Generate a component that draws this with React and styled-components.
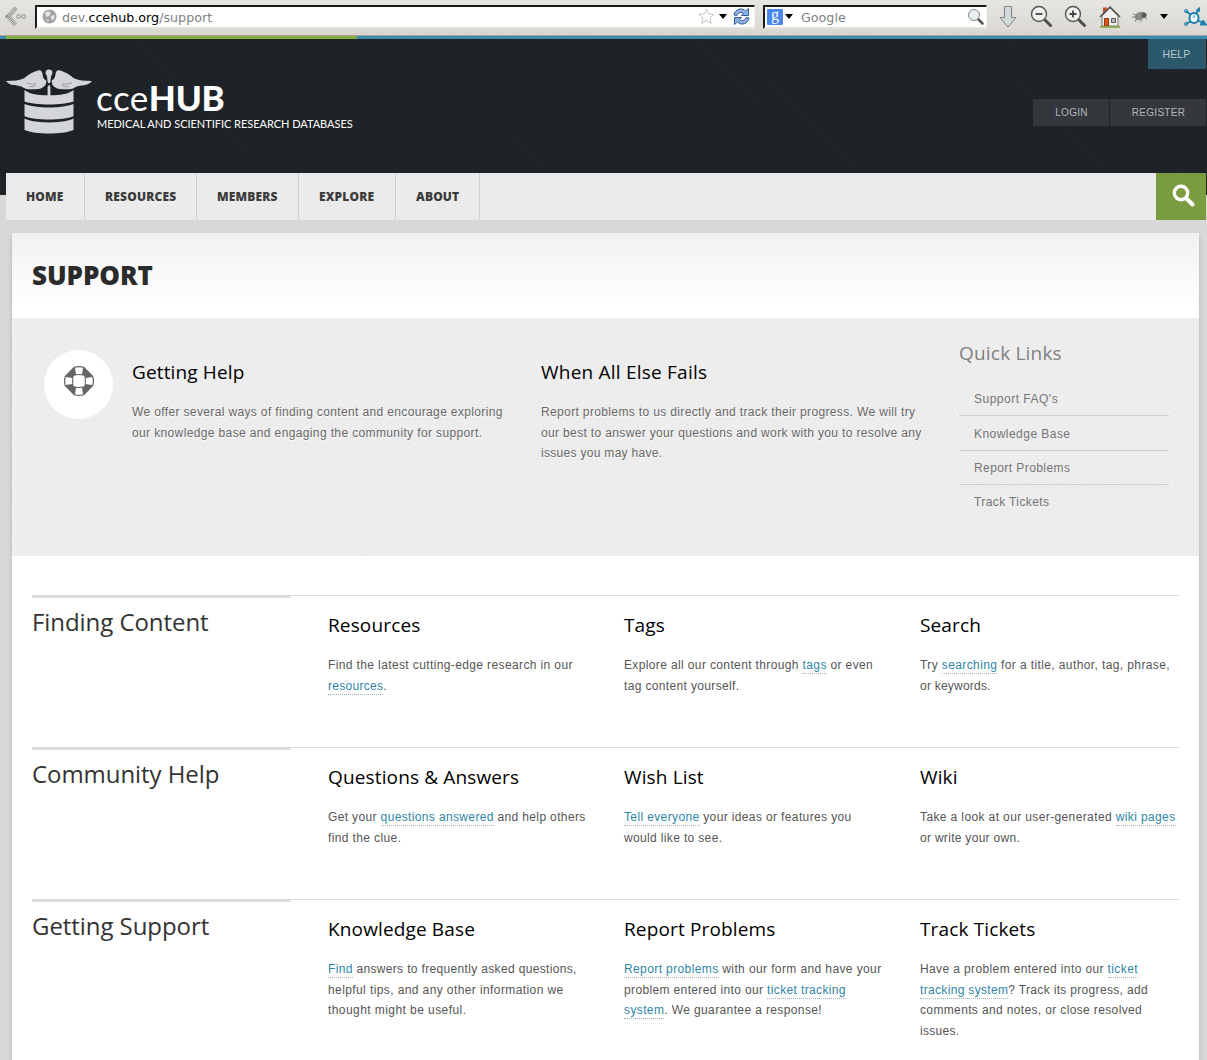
import React from "react";
import styled, { createGlobalStyle } from "styled-components";

const Global = createGlobalStyle`
  * { box-sizing: border-box; }
  body { margin: 0; background: #d8d8d8; font-family: "Liberation Sans", sans-serif; font-size: 12px; overflow: hidden; }
  h1, h2, h3, p, ul { margin: 0; padding: 0; font-weight: 400; }
  ul { list-style: none; }
  svg { display: block; flex: none; }
`;

const Toolbar = styled.div`
  display: flex; align-items: center; height: 36px; padding: 0 0 2px 4px; overflow: hidden;
  background: linear-gradient(#e6e5e1, #dad7d2); border-bottom: 1px solid #a9a29c;
`;
const Field = styled.div`
  display: flex; align-items: center; width: ${(p) => p.$w}px; height: 24px; margin-left: ${(p) => p.$ml}px; flex: none;
  background: #fff; border: solid; border-width: 2px 1px 2px 2px; border-color: #1c1b1a #efeeeb #e4e2de #1c1b1a;
  font: 12.7px "DejaVu Sans", sans-serif; color: #808080; white-space: pre;
`;
const Host = styled.span`color: #000;`;
const Url = styled.span`flex: 1; padding: 1px 0 0 ${(p) => p.$pl}px;`;
const Caret = styled.i`
  flex: none; border: 4.5px solid transparent; border-top: 5px solid #000; border-bottom: 0;
  margin-left: ${(p) => p.$ml || 0}px; margin-right: ${(p) => p.$mr || 0}px;
`;
const G = styled.b`
  display: grid; place-items: center; width: 16px; height: 16px; margin-left: 2px; background: #4b86ee; border-radius: 1px;
  color: #fff; font: 400 16px/12px "Liberation Serif", serif; padding-bottom: 3px;
`;
const ToolIcon = styled.svg`margin-left: ${(p) => p.$ml || 0}px; margin-right: ${(p) => p.$mr || 0}px;`;

const Page = styled.div`
  height: 1024px; overflow: hidden;
  background: linear-gradient(#1f2429 159px, #d8d8d8 159px);
`;
const Stripe = styled.div`
  height: 3px; background: linear-gradient(90deg, #3b8bb0 6px, #86ae43 6px, #86ae43 357px, #3b8bb0 357px);
`;
const Header = styled.header`
  display: flex; justify-content: space-between; height: 134px; padding: 0 1px 0 6px;
  background: repeating-linear-gradient(45deg, rgba(0,0,0,.08) 0 1px, transparent 1px 3px), #1f2429;
`;
const Brand = styled.div`display: flex; padding-top: 30px; color: #fff;`;
const BrandText = styled.div`padding: 10px 0 0 4px; font-family: Lato, sans-serif;`;
const BrandName = styled.div`
  font-size: 35px; line-height: 37px; letter-spacing: .5px;
  b { font-weight: 900; letter-spacing: -.2px; }
`;
const Tagline = styled.div`
  margin: 1px 0 0 1px; font-size: 11px; line-height: 14px; letter-spacing: -.03px; white-space: nowrap;
`;
const Account = styled.div`display: flex; flex-direction: column; align-items: flex-end;`;
const Help = styled.a`
  display: grid; place-items: center; width: 58px; height: 30px; padding: 0 1px 1px 0; background: #2c586c;
  color: #b9c6cd; font-size: 10.5px; letter-spacing: .1px;
`;
const Buttons = styled.div`display: flex; gap: 1px; margin-top: 30px;`;
const Button = styled.a`
  display: grid; place-items: center; width: ${(p) => p.$w}px; height: 27px; padding-left: 1px; background: #34383d;
  color: #b4b6b8; font-size: 10px; letter-spacing: .3px;
`;
const Nav = styled.nav`display: flex; height: 47px; margin: 0 1px 0 6px; background: #ebebeb;`;
const NavItem = styled.a`
  width: ${(p) => p.$w}px; padding-left: 20px; border-right: 1px solid #d0d0d0;
  font: 800 12px/47px "Open Sans", sans-serif; color: #3b3b3b; letter-spacing: .17px;
`;
const SearchBtn = styled.div`
  width: 50px; margin-left: auto; padding: 11px 0 0 16px;
  background: repeating-linear-gradient(125deg, rgba(0,0,0,.03) 0 1px, transparent 1px 4px), #7c9d40;
`;

const Card = styled.main`height: 900px; margin: 13px 8px 0 12px; background: #fff; box-shadow: 0 3px 5px rgba(0,0,0,.16);`;
const TitleBar = styled.div`height: 85px; padding: 0 20px; background: linear-gradient(#f1f1f1, #fff 85%);`;
const Title = styled.h1`font: 800 26px/85px "Open Sans", sans-serif; color: #2b2b2b; letter-spacing: -.05px;`;
const Intro = styled.section`
  display: flex; height: 238px; padding: 0 30px 0 32px;
  background:
    repeating-linear-gradient(63deg, rgba(0,0,0,.008) 0 1px, transparent 1px 4px),
    repeating-linear-gradient(-38deg, rgba(255,255,255,.12) 0 1px, transparent 1px 5px), #ededed;
`;
const Circle = styled.div`
  flex: none; width: 69px; height: 69px; margin: 32px 19px 0 0; padding: 16px 0 0 20px; border-radius: 50%; background: #fff;
`;
const IntroCol = styled.div`flex: none; width: ${(p) => p.$w}px; padding-top: 39px; p { color: #666; text-shadow: 0 1px 0 #fff; }`;
const H3 = styled.h3`
  font: 400 19px/30px "Open Sans", sans-serif; color: ${(p) => p.$c || "#000"}; letter-spacing: ${(p) => p.$ls ?? 0.14}px; white-space: nowrap;
`;
const Copy = styled.p`margin-top: 15px; color: #555;`;
const Line = styled.span`
  display: block; height: 20.6px; line-height: 20.6px; white-space: nowrap; letter-spacing: ${(p) => p.$ls}px;
`;
const Link = styled.a`color: #2e86a5; padding-bottom: 1px; border-bottom: 1px dotted #9ab5bb;`;
const Quick = styled.aside`flex: 1; padding-top: 20px;`;
const QuickList = styled.ul`margin-top: 13px;`;
const QuickItem = styled.li`
  height: 34.4px; padding-left: 15px; line-height: ${(p) => p.$lh || 35}px; color: #757575; letter-spacing: ${(p) => p.$ls}px;
  & + & { border-top: 1px solid #cfcfcf; }
`;
const Sections = styled.div`padding: 39px 20px 0;`;
const Section = styled.section`
  display: grid; grid-template-columns: 259px 259px 259px 1fr; column-gap: 37px; height: 152px; border-top: 1px solid #dedede;
`;
const Topic = styled.h2`
  height: 40px; margin-top: -1px; border-top: 3px solid #dedede;
  font: 400 24px/47px "Open Sans", sans-serif; color: #333; letter-spacing: -.06px;
`;
const Cell = styled.div`padding-top: 14px;`;

const Text = ({ lines }) => (
  <Copy>
    {lines.map(([ls, ...parts], i) => (
      <Line key={i} $ls={ls}>
        {parts.map((t, j) => (t[0] === "@" ? <Link key={j}>{t.slice(1)}</Link> : t))}
      </Line>
    ))}
  </Copy>
);

const SECTIONS = [
  { t: "Finding Content", cells: [
    ["Resources", [[0.38, "Find the latest cutting-edge research in our"], [0.28, "@resources", "."]]],
    ["Tags", [[0.37, "Explore all our content through ", "@tags", " or even"], [0.35, "tag content yourself."]]],
    ["Search", [[0.39, "Try ", "@searching", " for a title, author, tag, phrase,"], [0.22, "or keywords."]]],
  ] },
  { t: "Community Help", cells: [
    ["Questions & Answers", [[0.36, "Get your ", "@questions answered", " and help others"], [0.37, "find the clue."]]],
    ["Wish List", [[0.37, "@Tell everyone", " your ideas or features you"], [0.35, "would like to see."]]],
    ["Wiki", [[0.38, "Take a look at our user-generated ", "@wiki pages"], [0.3, "or write your own."]]],
  ] },
  { t: "Getting Support", cells: [
    ["Knowledge Base", [[0.34, "@Find", " answers to frequently asked questions,"], [0.4, "helpful tips, and any other information we"], [0.43, "thought might be useful."]]],
    ["Report Problems", [[0.39, "@Report problems", " with our form and have your"], [0.36, "problem entered into our ", "@ticket tracking"], [0.38, "@system", ". We guarantee a response!"]]],
    ["Track Tickets", [[0.38, "Have a problem entered into our ", "@ticket"], [0.33, "@tracking system", "? Track its progress, add"], [0.36, "comments and notes, or close resolved"], [0.3, "issues."]]],
  ] },
];

const Magnifier = ({ sign, ml }) => (
  <ToolIcon $ml={ml} width="24" height="24" viewBox="0 0 24 24">
    <path d="M15 15l5.500 5.500" stroke="#4c4c4c" strokeWidth="3" strokeLinecap="round" />
    <circle cx="9" cy="9" r="7.500" fill="#f0f0ee" stroke="#555753" strokeWidth="1.400" />
    <path d={sign === "+" ? "M5.500 9h7M9 5.500v7" : "M5.500 9h7"} stroke="#444" strokeWidth="1.800" />
  </ToolIcon>
);

const Logo = () => (
  <svg width="86" height="66" viewBox="0 0 86 66" fill="#d3d5d8">
    <circle cx="43" cy="3.800" r="3.400" />
    <path d="M40.800 6h4.400l-1 8h-2.400z" />
    <path d="M0 12C8 12 14 11.500 18 9.300c4-3 7-5.700 14-7.800 3-.8 3.500.5 4.300 2.500C37 8 37 10 40.500 11.500L39.500 16c-2 2.800-6 4.500-11 4.300-4-.2-7 .5-10-1-2-1-3-2-6-2.500C8 16.300 3 16 0 12z" />
    <path d="M86 12C78 12 72 11.500 68 9.300c-4-3-7-5.700-14-7.800-3-.8-3.500.5-4.300 2.500C49 8 49 10 45.500 11.500L46.500 16c2 2.800 6 4.500 11 4.300 4-.2 7 .5 10-1 2-1 3-2 6-2.500C78 16.300 83 16 86 12z" />
    <path d="M20 14c4 .8 7 2 10 .5M23 17.500c3 .6 5 0 7-1.500M66 14c-4 .8-7 2-10 .5M63 17.500c-3 .6-5 0-7-1.500" stroke="#73777b" strokeWidth=".6" fill="none" />
    <path d="M41.600 18L43 15.500l1.400 2.500v9h-2.800z" />
    <path d="M18.500 21C22 24 29 26 38 26.300h10c9-.3 16-2.300 19.500-5.300v11.500c-11 4-38 4-49 0z" />
    <path d="M18.500 35c11 4.600 38 4.600 49 0v12.300c-11 4.400-38 4.400-49 0z" />
    <path d="M18.500 49.500c11 5.200 38 5.200 49 0V61c-11 4.800-38 4.800-49 0z" />
  </svg>
);

export default function App() {
  return (
    <>
      <Global />
      <Toolbar>
        <ToolIcon width="24" height="22" viewBox="0 0 24 22" fill="none" stroke="#8d8c89">
          <path d="M12 2L4 10.500l8 8.500" strokeWidth="4.500" strokeDasharray="1 .8" />
          <circle cx="14.500" cy="10.500" r="1.800" /><circle cx="19.700" cy="10.500" r="1.800" />
        </ToolIcon>
        <Field $w={720} $ml={7}>
          <ToolIcon $ml={5} width="15" height="15" viewBox="0 0 15 15">
            <circle cx="7.500" cy="7.500" r="7" fill="#a3a3a3" />
            <path d="M3 4l3-2 3 2-2 3-3 1zM9 7l4-1-1 4-3 1zM4 10l3 1-1 2z" fill="#e4e4e4" />
          </ToolIcon>
          <Url $pl={5}>dev.<Host>ccehub.org</Host>/support</Url>
          <ToolIcon $mr={1} width="17" height="17" viewBox="0 0 17 17">
            <path d="M8.500 1l2.200 5 5.300.4-4 3.600 1.200 5.300-4.700-2.900-4.700 2.900L5 10 1 6.400 6.300 6z" fill="#fff" stroke="#c4c4c4" />
          </ToolIcon>
          <Caret $ml={3} />
          <ToolIcon $ml={6} $mr={4} width="17" height="17" viewBox="0 0 17 17">
            <path d="M1 7C2 1 9-1 12.500 3L15.500 .5v7H8.500l2-2C8 3.500 5 4.500 4 7.500z" fill="#8fb1df" stroke="#204f94" strokeWidth=".9" />
            <path d="M16 10c-1 6-8 8-11.500 4L1.500 16.500v-7h7l-2 2c2.500 2 5.500 1 6.500-2z" fill="#8fb1df" stroke="#204f94" strokeWidth=".9" />
          </ToolIcon>
        </Field>
        <Field $w={224} $ml={8}>
          <G>g</G>
          <Caret $ml={2} />
          <Url $pl={8}>Google</Url>
          <ToolIcon $mr={1} width="18" height="18" viewBox="0 0 18 18">
            <path d="M11 11l4.500 4.500" stroke="#555" strokeWidth="2.600" strokeLinecap="round" />
            <circle cx="7" cy="7" r="5.500" fill="#e6eef2" stroke="#8a8a8a" />
          </ToolIcon>
        </Field>
        <ToolIcon $ml={11} width="20" height="24" viewBox="0 0 20 24">
          <path d="M6.500 1.500h7v11h4.500l-8 9.500-8-9.500h4.500z" fill="#d5dada" stroke="#7f8282" strokeLinejoin="round" />
        </ToolIcon>
        <Magnifier sign="-" ml={12} />
        <Magnifier sign="+" ml={10} />
        <ToolIcon $ml={11} width="22" height="22" viewBox="0 0 22 22">
          <path d="M4 1.500h4v7H4z" fill="#c94f24" />
          <path d="M3 10l8-8 8 8v10H3z" fill="#efefed" stroke="#77776f" />
          <path d="M1 11L11 1l10 10" fill="none" stroke="#555" strokeWidth="1.500" />
          <path d="M5.500 12.500h4V20h-4z" fill="#e0561d" stroke="#8f3310" /><path d="M12.500 12.500h4v4h-4z" fill="#bbb" stroke="#555" />
          <path d="M1 21h20" stroke="#80a93b" strokeWidth="1.600" />
        </ToolIcon>
        <ToolIcon $ml={10} width="18" height="16" viewBox="0 0 18 16">
          <ellipse cx="9" cy="7" rx="5.500" ry="4" fill="#8d8d8b" transform="rotate(-20 9 7)" /><circle cx="13" cy="6" r="2.600" fill="#565654" />
          <path d="M2 5l5 2M1 8l5 0M6 9l-2 4M10 9l0 4M13 8l3 2" stroke="#777" strokeWidth=".8" />
        </ToolIcon>
        <Caret $ml={11} />
        <ToolIcon $ml={15} width="24" height="24" viewBox="0 0 24 24" fill="none" stroke="#1f7fae">
          <path d="M3 6l5 4M15 5l-2 4M3 19l5-3M14 15l6 3" strokeWidth="1.800" />
          <circle cx="3" cy="6" r="1.500" /><circle cx="3" cy="19" r="1.500" /><path d="M13.500 5l3-2.500v4zM17 20h7l-4-5z" fill="#1f7fae" />
          <ellipse cx="11" cy="13" rx="4.500" ry="5" fill="#f4fbff" strokeWidth="2" /><path d="M11 10v3" />
        </ToolIcon>
      </Toolbar>
      <Page>
        <Stripe />
        <Header>
          <Brand>
            <Logo />
            <BrandText>
              <BrandName>cce<b>HUB</b></BrandName>
              <Tagline>MEDICAL AND SCIENTIFIC RESEARCH DATABASES</Tagline>
            </BrandText>
          </Brand>
          <Account>
            <Help>HELP</Help>
            <Buttons><Button $w={76}>LOGIN</Button><Button $w={96}>REGISTER</Button></Buttons>
          </Account>
        </Header>
        <Nav>
          <NavItem $w={79}>HOME</NavItem>
          <NavItem $w={112}>RESOURCES</NavItem>
          <NavItem $w={102}>MEMBERS</NavItem>
          <NavItem $w={97}>EXPLORE</NavItem>
          <NavItem $w={84}>ABOUT</NavItem>
          <SearchBtn>
            <svg width="24" height="24" viewBox="0 0 24 24" fill="none" stroke="#fff" strokeLinecap="round">
              <circle cx="9" cy="9" r="6.700" strokeWidth="3.400" /><path d="M14.500 14.500l6 6" strokeWidth="4" />
            </svg>
          </SearchBtn>
        </Nav>
        <Card>
          <TitleBar><Title>SUPPORT</Title></TitleBar>
          <Intro>
            <Circle>
              <svg width="30" height="30" viewBox="0 0 30 30">
                <path d="M10 .8q5-1.600 10 0L29.200 10q1.600 5 0 10L20 29.200q-5 1.600-10 0L.8 20q-1.600-5 0-10z" fill="#666" />
                <path d="M11 1.700q4-1 8 0L18 8.300q-3-.6-6 0zM11 28.300q4 1 8 0L18 21.700q-3 .6-6 0zM1.700 11q-1 4 0 8L8.300 18q-.6-3 0-6zM28.300 11q1 4 0 8L21.700 18q.6-3 0-6z" fill="#fff" />
                <path d="M10.500 9.500q4.500-.8 9 0l1 1q.8 4.500 0 9l-1 1q-4.500.8-9 0l-1-1q-.8-4.500 0-9z" fill="#fff" />
              </svg>
            </Circle>
            <IntroCol $w={409}>
              <H3>Getting Help</H3>
              <Text lines={[[0.36, "We offer several ways of finding content and encourage exploring"], [0.37, "our knowledge base and engaging the community for support."]]} />
            </IntroCol>
            <IntroCol $w={418}>
              <H3 $ls={0.22}>When All Else Fails</H3>
              <Text lines={[[0.36, "Report problems to us directly and track their progress. We will try"], [0.35, "our best to answer your questions and work with you to resolve any"], [0.3, "issues you may have."]]} />
            </IntroCol>
            <Quick>
              <H3 $c="#808080" $ls={0.2}>Quick Links</H3>
              <QuickList>
                <QuickItem $lh={36} $ls={0.5}>Support FAQ's</QuickItem>
                <QuickItem $lh={36} $ls={0.46}>Knowledge Base</QuickItem>
                <QuickItem $ls={0.42}>Report Problems</QuickItem>
                <QuickItem $ls={0.4}>Track Tickets</QuickItem>
              </QuickList>
            </Quick>
          </Intro>
          <Sections>
            {SECTIONS.map((s) => (
              <Section key={s.t}>
                <Topic>{s.t}</Topic>
                {s.cells.map(([h, lines]) => (
                  <Cell key={h}><H3>{h}</H3><Text lines={lines} /></Cell>
                ))}
              </Section>
            ))}
          </Sections>
        </Card>
      </Page>
    </>
  );
}
